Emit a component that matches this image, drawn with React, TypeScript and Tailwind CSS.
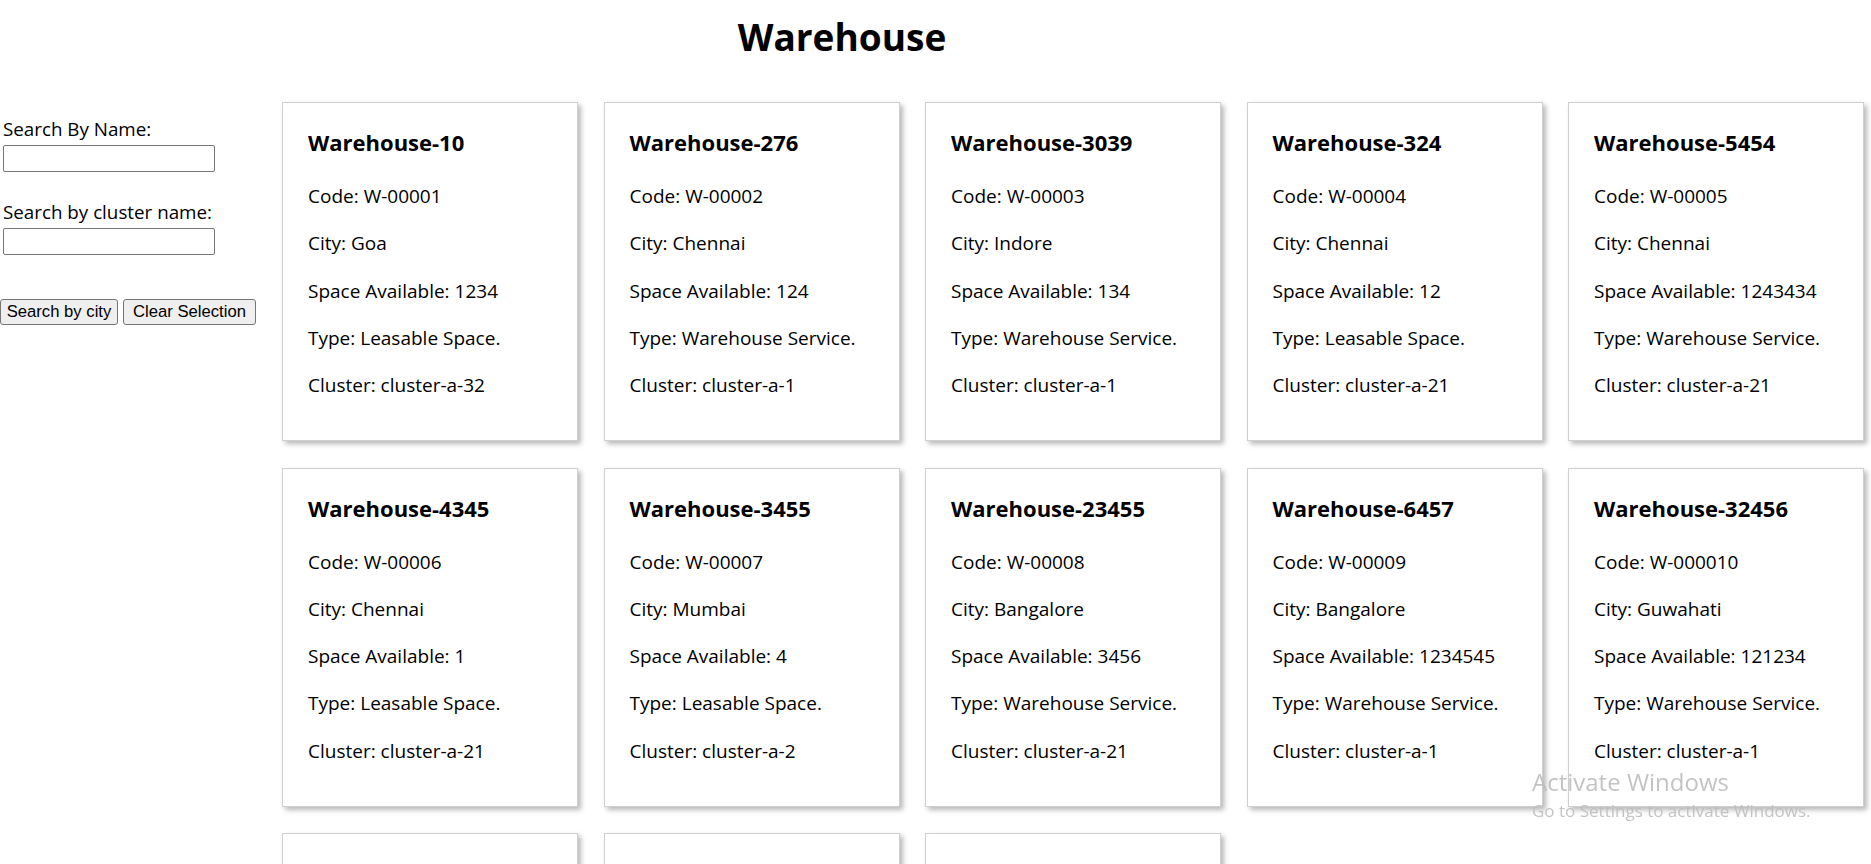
import React from "react";

type Warehouse = {
  id: number;
  name: string;
  code: string;
  city: string;
  space: number;
  type: string;
  cluster: string;
};

const warehouses: Warehouse[] = [
  { id: 1, name: "Warehouse-10", code: "W-00001", city: "Goa", space: 1234, type: "Leasable Space", cluster: "cluster-a-32" },
  { id: 2, name: "Warehouse-276", code: "W-00002", city: "Chennai", space: 124, type: "Warehouse Service", cluster: "cluster-a-1" },
  { id: 3, name: "Warehouse-3039", code: "W-00003", city: "Indore", space: 134, type: "Warehouse Service", cluster: "cluster-a-1" },
  { id: 4, name: "Warehouse-324", code: "W-00004", city: "Chennai", space: 12, type: "Leasable Space", cluster: "cluster-a-21" },
  { id: 5, name: "Warehouse-5454", code: "W-00005", city: "Chennai", space: 1243434, type: "Warehouse Service", cluster: "cluster-a-21" },
  { id: 6, name: "Warehouse-4345", code: "W-00006", city: "Chennai", space: 1, type: "Leasable Space", cluster: "cluster-a-21" },
  { id: 7, name: "Warehouse-3455", code: "W-00007", city: "Mumbai", space: 4, type: "Leasable Space", cluster: "cluster-a-2" },
  { id: 8, name: "Warehouse-23455", code: "W-00008", city: "Bangalore", space: 3456, type: "Warehouse Service", cluster: "cluster-a-21" },
  { id: 9, name: "Warehouse-6457", code: "W-00009", city: "Bangalore", space: 1234545, type: "Warehouse Service", cluster: "cluster-a-1" },
  { id: 10, name: "Warehouse-32456", code: "W-000010", city: "Guwahati", space: 121234, type: "Warehouse Service", cluster: "cluster-a-1" },
  { id: 11, name: "Warehouse-7654", code: "W-000011", city: "Delhi", space: 2345, type: "Leasable Space", cluster: "cluster-a-3" },
  { id: 12, name: "Warehouse-8765", code: "W-000012", city: "Pune", space: 567, type: "Warehouse Service", cluster: "cluster-a-2" },
  { id: 13, name: "Warehouse-9876", code: "W-000013", city: "Kolkata", space: 890, type: "Leasable Space", cluster: "cluster-a-32" },
];

const WarehouseCard = ({ w }: { w: Warehouse }) => (
  <div className="h-[339px] w-[296px] border border-[#cfcfcf] bg-white px-[25px] pt-[26px] shadow-[3px_3px_5px_rgba(0,0,0,0.28)]">
    <h3 className="text-[22px] font-bold leading-[27px]">{w.name}</h3>
    <p className="mt-[27px] leading-[27px]">Code: {w.code}</p>
    <p className="mt-[20.3px] leading-[27px]">City: {w.city}</p>
    <p className="mt-[20.3px] leading-[27px]">Space Available: {w.space}</p>
    <p className="mt-[20.3px] leading-[27px]">Type: {w.type}.</p>
    <p className="mt-[20.3px] leading-[27px]">Cluster: {w.cluster}</p>
  </div>
);

export default function App() {
  return (
    <div className="relative min-h-screen bg-white text-[19px] text-black font-['Open_Sans',sans-serif]">
      <div className="h-[102px] w-[1684px] pt-[13px] text-center">
        <h1 className="text-[37px] font-bold leading-[48px]">Warehouse</h1>
      </div>

      <div className="flex">
        <aside className="w-[282px] shrink-0 pl-[3px] pt-[13.6px] text-[18.8px]">
          <label className="block leading-[27px]">Search By Name:</label>
          <input
            type="text"
            className="mt-[2.4px] block h-[27px] w-[212px] rounded-[2px] border border-[#767676] bg-white"
          />
          <label className="mt-[26.6px] block leading-[27px]">Search by cluster name:</label>
          <input
            type="text"
            className="mt-[2.4px] block h-[27px] w-[212px] rounded-[2px] border border-[#767676] bg-white"
          />
          <div className="-ml-[3px] mt-[44px] flex gap-[5px] font-['Liberation_Sans',Arial,sans-serif] text-[16.67px]">
            <button className="h-[26px] w-[118px] rounded-[3px] border border-[#767676] bg-[#efefef] leading-none">
              Search by city
            </button>
            <button className="h-[26px] w-[133px] rounded-[3px] border border-[#767676] bg-[#efefef] leading-none">
              Clear Selection
            </button>
          </div>
        </aside>

        <main className="grid grid-cols-[repeat(5,296px)] gap-x-[25.5px] gap-y-[26.5px]">
          {warehouses.map((w) => (
            <WarehouseCard key={w.id} w={w} />
          ))}
        </main>
      </div>

      {/* windows watermark */}
      <div className="pointer-events-none fixed left-[1532px] top-[767px] text-[#bdbdbd] opacity-90">
        <div className="text-[24px] leading-[30px]">Activate Windows</div>
        <div className="mt-[3px] text-[17px] leading-[22px]">Go to Settings to activate Windows.</div>
      </div>
    </div>
  );
}
